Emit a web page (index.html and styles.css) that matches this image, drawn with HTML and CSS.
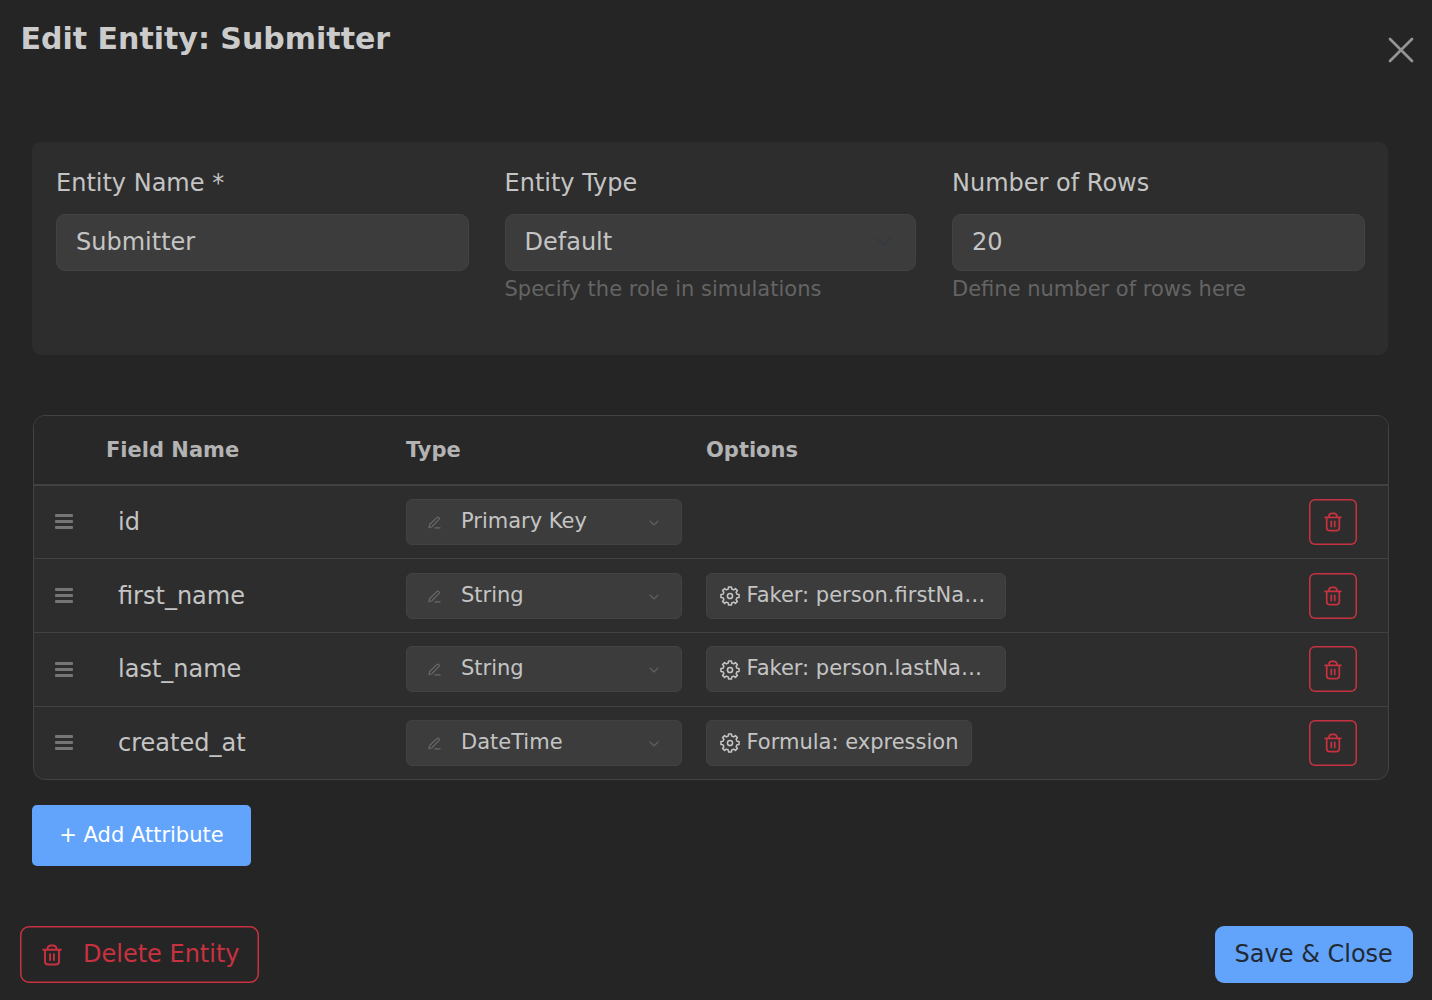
FILE: index.html
```html
<!DOCTYPE html>
<html lang="en">
<head>
<meta charset="utf-8">
<title>Edit Entity</title>
<link rel="stylesheet" href="styles.css">
</head>
<body>
<svg class="sprite" aria-hidden="true">
  <symbol id="trash" viewBox="0 0 20 22">
    <path d="M1.200 5.800h17.600M3 5.800v11.700a3 3 0 0 0 3 3h8a3 3 0 0 0 3-3v-11.700M5.500 5.500V4.800a3.300 3.300 0 0 1 3.300-3.300h2.400a3.300 3.300 0 0 1 3.300 3.300v.7M8.100 10.300v5.700M11.900 10.300v5.700"/>
  </symbol>
  <symbol id="gear" viewBox="0 0 24 24">
    <path d="M10.440 2.120L13.560 2.120 13.890 4.430 16.020 5.310 17.880 3.910 20.090 6.120 18.690 7.980 19.570 10.110 21.880 10.440 21.880 13.560 19.570 13.890 18.690 16.020 20.090 17.880 17.880 20.090 16.020 18.690 13.890 19.570 13.560 21.880 10.440 21.880 10.110 19.570 7.980 18.690 6.120 20.090 3.910 17.880 5.310 16.020 4.430 13.890 2.120 13.560 2.120 10.440 4.430 10.110 5.310 7.980 3.910 6.120 6.120 3.910 7.980 5.310 10.110 4.430z"/><circle cx="12" cy="12" r="2.800"/>
  </symbol>
  <symbol id="pen" viewBox="0 0 14 14">
    <path d="M1 12.700l.8-3.500 7.700-7.500a1.500 1.500 0 0 1 2.200 2.200l-7.500 7.700zM7.500 12.800h5.500"/>
  </symbol>
  <symbol id="chevron" viewBox="0 0 10 6"><path d="M1 1l4 4 4-4"/></symbol>
</svg>
<div class="dialog">
  <header class="header">
    <h1 class="title">Edit Entity: Submitter</h1>
    <button class="close" aria-label="Close"><svg viewBox="0 0 26 26"><path d="M2 2l22 22M24 2L2 24"/></svg></button>
  </header>
  <main class="content">
    <section class="panel">
      <div class="field"><span class="label">Entity Name *</span><div class="control">Submitter</div></div>
      <div class="field"><span class="label">Entity Type</span><div class="control">Default<svg class="control-arrow"><use href="#chevron"/></svg></div><span class="help">Specify the role in simulations</span></div>
      <div class="field"><span class="label">Number of Rows</span><div class="control">20</div><span class="help">Define number of rows here</span></div>
    </section>
    <section class="table">
      <div class="row head"><span></span><span>Field Name</span><span>Type</span><span>Options</span><span></span></div>
      <div class="row">
        <span class="grip"><i></i><i></i><i></i></span><span class="name">id</span>
        <div class="select"><svg class="pen"><use href="#pen"/></svg><span>Primary Key</span><svg class="arrow"><use href="#chevron"/></svg></div>
        <div></div>
        <button class="remove" aria-label="Delete"><svg class="trash"><use href="#trash"/></svg></button>
      </div>
      <div class="row">
        <span class="grip"><i></i><i></i><i></i></span><span class="name">first_name</span>
        <div class="select"><svg class="pen"><use href="#pen"/></svg><span>String</span><svg class="arrow"><use href="#chevron"/></svg></div>
        <div class="option wide"><svg class="gear"><use href="#gear"/></svg><span>Faker: person.firstNa…</span></div>
        <button class="remove" aria-label="Delete"><svg class="trash"><use href="#trash"/></svg></button>
      </div>
      <div class="row">
        <span class="grip"><i></i><i></i><i></i></span><span class="name">last_name</span>
        <div class="select"><svg class="pen"><use href="#pen"/></svg><span>String</span><svg class="arrow"><use href="#chevron"/></svg></div>
        <div class="option wide"><svg class="gear"><use href="#gear"/></svg><span>Faker: person.lastNa…</span></div>
        <button class="remove" aria-label="Delete"><svg class="trash"><use href="#trash"/></svg></button>
      </div>
      <div class="row">
        <span class="grip"><i></i><i></i><i></i></span><span class="name">created_at</span>
        <div class="select"><svg class="pen"><use href="#pen"/></svg><span>DateTime</span><svg class="arrow"><use href="#chevron"/></svg></div>
        <div class="option"><svg class="gear"><use href="#gear"/></svg><span>Formula: expression</span></div>
        <button class="remove" aria-label="Delete"><svg class="trash"><use href="#trash"/></svg></button>
      </div>
    </section>
    <button class="add">+ Add Attribute</button>
  </main>
  <footer class="footer">
    <button class="delete"><svg class="trash"><use href="#trash"/></svg>Delete Entity</button>
    <button class="save">Save &amp; Close</button>
  </footer>
</div>
</body>
</html>
```
FILE: styles.css
```css
* { box-sizing: border-box; }
body { margin: 0; background: #252525; color: #c4c4c4; font-family: "DejaVu Sans", sans-serif; font-size: 24px; }
button { font: inherit; background: none; padding: 0; margin: 0; border: 0; }
svg { display: block; flex: none; fill: none; stroke: currentColor; stroke-linecap: round; stroke-linejoin: round; }
.sprite { display: none; }
.dialog { height: 1000px; display: flex; flex-direction: column; overflow: hidden; }
.header { height: 142px; padding: 21px 18.500px 0 20.500px; display: flex; justify-content: space-between; align-items: flex-start; }
.title { margin: 0; font-size: 30px; line-height: 36px; font-weight: 700; color: #cbcbcb; }
.close { margin-top: 16px; color: #959595; }
.close svg { width: 26px; height: 26px; stroke-width: 2.700; }
.content { padding: 0 43.500px 0 32.500px; }
.panel { height: 212.500px; padding: 24px 23px 0 24px; border-radius: 9px; background: #2d2d2d; display: grid; grid-template-columns: 412.500px 411.500px 412.500px; column-gap: 36px; margin: 0 .5px 0 -.5px; }
.field { display: flex; flex-direction: column; }
.label { line-height: 34px; margin-bottom: 13.500px; white-space: nowrap; }
.control { height: 57px; padding: 0 23px 1px 19px; border: 1px solid #424242; border-radius: 9px; background: #3c3c3c; display: flex; align-items: center; justify-content: space-between; }
.control-arrow { width: 17px; height: 10px; margin: 1px 0 0; color: #343a40; stroke-width: 1; }
.help { margin-top: 3.500px; font-size: 21px; line-height: 31px; color: #646464; white-space: nowrap; }
.table { margin-top: 60.500px; border: 1px solid #424242; border-radius: 12px; overflow: hidden; background: #2d2d2d; }
.row { height: 73.600px; display: grid; grid-template-columns: 72.500px 300px 300px 603px 48px; align-items: center; border-top: 1px solid #424242; }
.row.head { height: 68px; border-top: 0; background: #282828; font-size: 21px; font-weight: 700; color: #b3b3b3; }
.head + .row { height: 74.400px; padding-bottom: .8px; border-top-width: 2px; }
.row:last-child { height: 73.200px; }
.grip { width: 18px; margin-left: 21.500px; display: grid; row-gap: 3px; }
.grip i { height: 3px; background: #757575; border-radius: 1px; }
.name { padding-left: 12px; }
.select, .option { height: 46px; border: 1px solid #424242; border-radius: 6px; background: #3c3c3c; display: flex; align-items: center; font-size: 21px; white-space: nowrap; }
.select { width: 276px; padding: 0 22px 0 21px; }
.select span, .option span { position: relative; top: -1px; }
.pen { width: 13px; height: 13px; margin: 1px 20px 0 0; color: #686868; stroke-width: 1.300; }
.arrow { width: 10px; height: 6px; margin: 2px 0 0 auto; color: #606060; stroke-width: 1.100; }
.option { justify-self: start; padding: 0 12.500px; }
.option.wide { width: 300px; }
.gear { width: 22px; height: 22px; margin: 1px 5.500px 0 -.5px; stroke-width: 1.700; }
.remove { width: 48px; height: 46px; box-shadow: inset 0 0 0 1.500px #c83240; border-radius: 6px; color: #c83240; display: grid; place-items: center; }
.remove .trash { width: 18px; height: 20px; margin-top: 1px; stroke-width: 1.900; }
.add { display: block; margin-top: 25px; width: 219px; height: 61px; padding-bottom: 1px; border-radius: 5px; background: #62a4fb; color: #fff; font-size: 21px; margin-left: -.5px; }
.footer { margin-top: auto; padding: 0 19px 17px 20px; display: flex; justify-content: space-between; }
.delete { width: 239px; height: 57px; padding: 0 0 2px 22px; box-shadow: inset 0 0 0 1.500px #c83240; border-radius: 9px; color: #c83240; display: flex; align-items: center; }
.delete .trash { width: 20px; height: 22px; margin: 3px 21px 0 0; stroke-width: 1.900; }
.save { width: 198.500px; height: 57px; padding-bottom: 2px; border-radius: 9px; background: #62a4fb; color: #212a34; }
```
